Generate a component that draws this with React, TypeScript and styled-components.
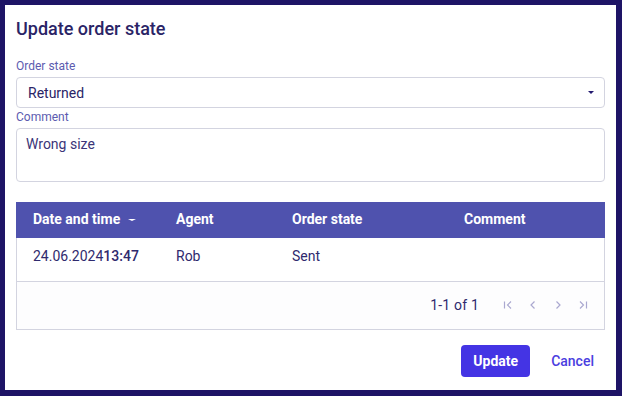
import styled, { createGlobalStyle } from "styled-components";

const Global = createGlobalStyle`
  html, body {
    margin: 0;
    padding: 0;
    background: #1e1466;
  }
  body {
    font-family: Roboto, "Liberation Sans", sans-serif;
  }
`;

const Frame = styled.div`
  width: 622px;
  height: 396px;
  box-sizing: border-box;
  padding: 5px 6px 6px 5px;
  background: #1e1466;
`;

const Dialog = styled.div`
  height: 100%;
  box-sizing: border-box;
  background: #fff;
  padding: 12px 11px 13px 11px;
  display: flex;
  flex-direction: column;
`;

const Title = styled.h2`
  margin: 0;
  font-size: 18px;
  font-weight: 500;
  line-height: 24px;
  color: #2a2466;
`;

const Label = styled.label<{ $top: number }>`
  display: block;
  font-size: 12px;
  line-height: 14px;
  color: #5c5cb0;
  margin-top: ${(p) => p.$top}px;
  margin-bottom: 4px;
`;

const Select = styled.div`
  height: 31px;
  box-sizing: border-box;
  border: 1px solid #d3d4e0;
  border-radius: 4px;
  display: flex;
  align-items: center;
  justify-content: space-between;
  padding: 0 10px 0 11px;
  font-size: 14px;
  color: #2a2466;
`;

const Caret = styled.span`
  width: 0;
  height: 0;
  border-left: 3.5px solid transparent;
  border-right: 3.5px solid transparent;
  border-top: 3.5px solid #231a70;
`;

const TextArea = styled.div`
  height: 54px;
  box-sizing: border-box;
  border: 1px solid #d3d4e0;
  border-radius: 4px;
  padding: 7px 9px;
  font-size: 14px;
  line-height: 16px;
  color: #3b3578;
`;

const Table = styled.div`
  margin-top: 20px;
  border: 1px solid #d3d4e0;
  border-top: none;
`;

const Row = styled.div<{ $head?: boolean }>`
  display: grid;
  grid-template-columns: 143px 116px 172px 1fr;
  align-items: ${(p) => (p.$head ? "center" : "start")};
  box-sizing: border-box;
  height: ${(p) => (p.$head ? "36px" : "44px")};
  padding-top: ${(p) => (p.$head ? "0" : "10px")};
  background: ${(p) => (p.$head ? "#4f52ae" : "#fff")};
  color: ${(p) => (p.$head ? "#fff" : "#2f2a6e")};
  font-size: 14px;
  line-height: 16px;
  font-weight: ${(p) => (p.$head ? 700 : 400)};
  border-bottom: ${(p) => (p.$head ? "none" : "1px solid #d3d4e0")};
  margin: ${(p) => (p.$head ? "0 -1px" : "0")};
  padding-left: ${(p) => (p.$head ? "17px" : "16px")};
  padding-bottom: ${(p) => (p.$head ? "2px" : "0")};
`;

const SortArrow = styled.span`
  display: inline-block;
  margin-left: 8px;
  width: 0;
  height: 0;
  vertical-align: middle;
  border-left: 4px solid transparent;
  border-right: 4px solid transparent;
  border-top: 2.5px solid #fff;
`;

const Time = styled.span`
  font-weight: 500;
`;

const Pager = styled.div`
  height: 47px;
  display: flex;
  align-items: center;
  justify-content: flex-end;
  padding-right: 9px;
  padding-bottom: 2px;
  box-sizing: border-box;
  font-size: 14px;
  color: #2f2a6e;
  background: #fdfdfe;
`;

const Count = styled.span`
  margin-right: 16px;
  letter-spacing: 0.2px;
`;

const PageButton = styled.span`
  width: 25px;
  display: flex;
  justify-content: center;
  color: #aaa8d0;
`;

const Actions = styled.div`
  margin-top: auto;
  display: flex;
  justify-content: flex-end;
  align-items: center;
  gap: 21px;
  padding-right: 11px;
`;

const Button = styled.button<{ $primary?: boolean }>`
  font-family: inherit;
  font-size: 14px;
  font-weight: ${(p) => (p.$primary ? 700 : 500)};
  height: 32px;
  padding: 0 ${(p) => (p.$primary ? "12px" : "0")};
  border: none;
  border-radius: 4px;
  background: ${(p) => (p.$primary ? "#4434e4" : "transparent")};
  color: ${(p) => (p.$primary ? "#fff" : "#4a3ee0")};
`;

const Icon = ({ d }: { d: string }) => (
  <svg width="12" height="12" viewBox="0 0 12 12" fill="none" stroke="currentColor" strokeWidth="1.2">
    <path d={d} />
  </svg>
);

export default function App() {
  return (
    <Frame>
      <Global />
      <Dialog>
        <Title>Update order state</Title>
        <Label $top={18}>Order state</Label>
        <Select>
          <span>Returned</span>
          <Caret />
        </Select>
        <Label $top={2}>Comment</Label>
        <TextArea>Wrong size</TextArea>
        <Table>
          <Row $head>
            <span>
              Date and time
              <SortArrow />
            </span>
            <span>Agent</span>
            <span>Order state</span>
            <span>Comment</span>
          </Row>
          <Row>
            <span>
              24.06.2024<Time>13:47</Time>
            </span>
            <span>Rob</span>
            <span>Sent</span>
            <span></span>
          </Row>
          <Pager>
            <Count>1-1 of 1</Count>
            <PageButton>
              <Icon d="M2.5 2.5v7M9 2.5 5.5 6 9 9.5" />
            </PageButton>
            <PageButton>
              <Icon d="M7.5 2.5 4 6l3.5 3.5" />
            </PageButton>
            <PageButton>
              <Icon d="M4.5 2.5 8 6 4.5 9.5" />
            </PageButton>
            <PageButton>
              <Icon d="M3 2.5 6.5 6 3 9.5M9.5 2.5v7" />
            </PageButton>
          </Pager>
        </Table>
        <Actions>
          <Button $primary>Update</Button>
          <Button>Cancel</Button>
        </Actions>
      </Dialog>
    </Frame>
  );
}
